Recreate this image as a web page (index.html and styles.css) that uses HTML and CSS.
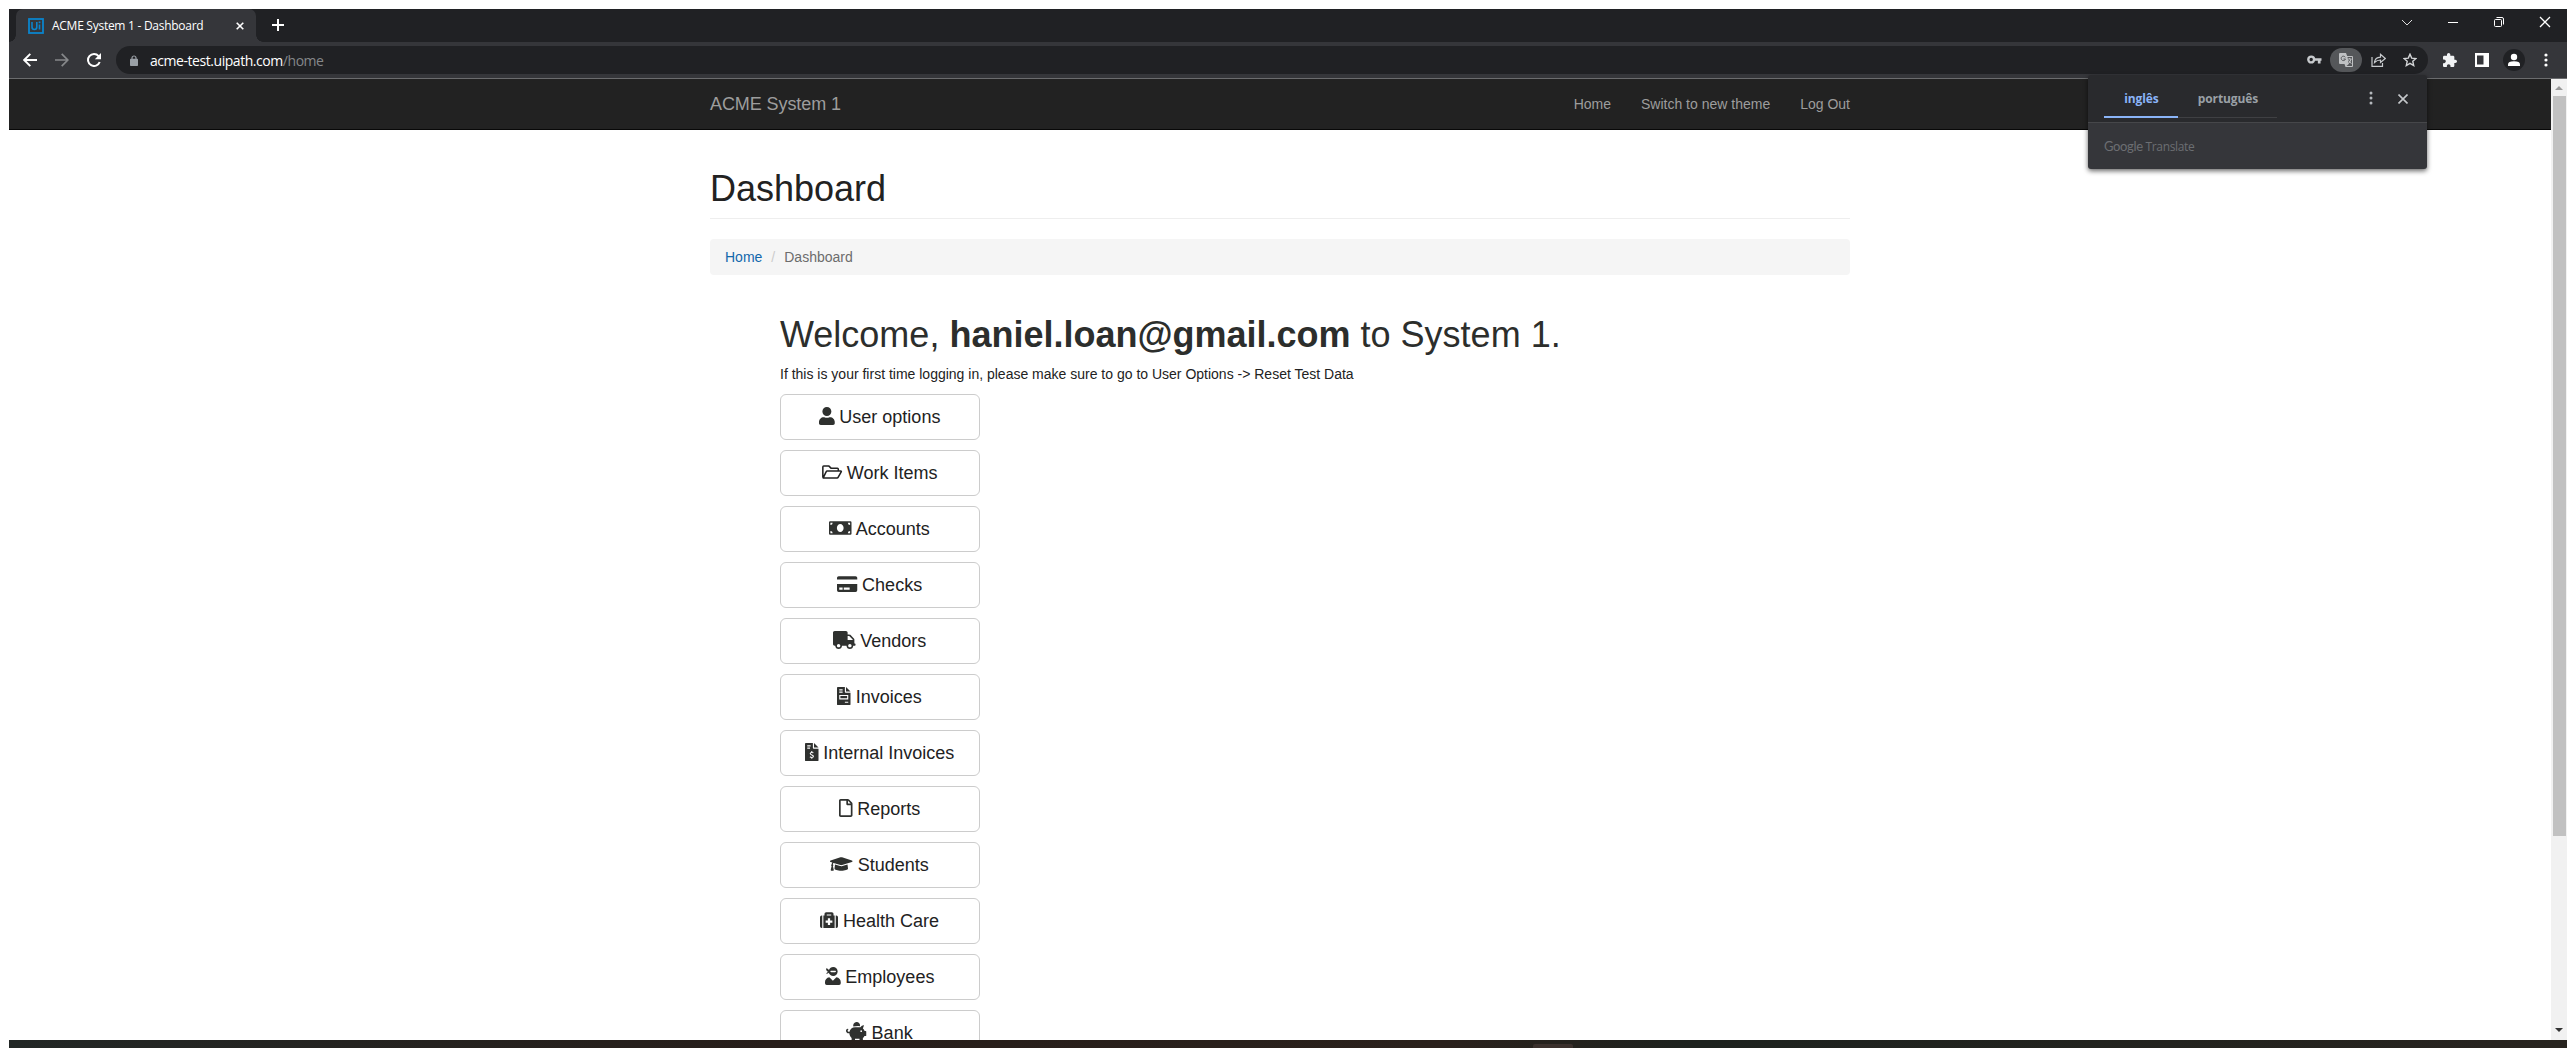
FILE: index.html
```
<!DOCTYPE html>
<html lang="en">
<head>
<meta charset="utf-8">
<title>ACME System 1 - Dashboard</title>
<link rel="stylesheet" href="styles.css">
</head>
<body>
<div class="window">
  <div class="tabstrip">
    <div class="tab">
      <svg class="favicon" viewBox="0 0 16 16"><rect x="1" y="1" width="14" height="14" fill="none" stroke="#0b84cc" stroke-width="1.8"/><path d="M4 4v5q0 2.500 2.400 2.500T8.800 9V4M11.500 6.500v5" fill="none" stroke="#0b84cc" stroke-width="1.6"/><rect x="10.700" y="3.500" width="1.700" height="1.700" fill="#0b84cc"/></svg>
      <span class="tab-title">ACME System 1 - Dashboard</span>
      <svg class="tab-close" viewBox="0 0 8 8"><path d="M.7.700l6.600 6.600M7.300.7.700 7.300" stroke="#fff" stroke-width="1.600"/></svg>
    </div>
    <svg class="new-tab" viewBox="0 0 12 12"><path d="M6 0v12M0 6h12" stroke="#fff" stroke-width="2"/></svg>
    <div class="controls">
      <svg width="12" height="16" viewBox="0 0 12 16"><path d="M1 6l5 5 5-5" fill="none" stroke="#ddd"/></svg>
      <svg width="12" height="16" viewBox="0 0 12 16"><path d="M1 8.500h10" stroke="#fff"/></svg>
      <svg width="12" height="16" viewBox="0 0 12 16"><rect x="1.500" y="5.500" width="7" height="7" rx="1" fill="none" stroke="#fff"/><path d="M3.500 3.500H9q1.500 0 1.500 1.500v5.500" fill="none" stroke="#fff"/></svg>
      <svg width="12" height="16" viewBox="0 0 12 16"><path d="M1 3l10 10M11 3L1 13" stroke="#fff" stroke-width="1.300"/></svg>
    </div>
  </div>
  <div class="toolbar">
    <div class="nav-icons">
      <svg width="14" height="14" viewBox="0 0 14 14"><path d="M14 7H1.500M7.300.8L1.200 7l6.100 6.200" fill="none" stroke="#fff" stroke-width="1.900"/></svg>
      <svg width="14" height="14" viewBox="0 0 14 14"><path d="M0 7h12.500M6.700.8L12.800 7l-6.100 6.200" fill="none" stroke="#86888a" stroke-width="1.700"/></svg>
      <svg width="14" height="14" viewBox="0 0 14 14"><path d="M11.600 3.100A6 6 0 1 0 12.700 9" fill="none" stroke="#fff" stroke-width="2"/><path d="M14 0v6.200H7.800z" fill="#fff"/></svg>
    </div>
    <div class="omnibox">
      <svg class="lock" viewBox="0 0 8 11"><path d="M2 4.500V3a2 2 0 0 1 4 0v1.500" fill="none" stroke="#9aa0a6" stroke-width="1.200"/><rect y="3.800" width="8" height="7.200" rx=".8" fill="#9aa0a6"/></svg>
      <span class="url">acme-test.uipath.com<span class="path">/home</span></span>
      <div class="omni-icons">
        <svg width="15" height="14" viewBox="0 0 15 14"><circle cx="4.200" cy="6.500" r="2.900" fill="none" stroke="#c7cacd" stroke-width="2.400"/><path d="M7 6.500h7.500M12.200 6.500v4" stroke="#c7cacd" stroke-width="2.700"/></svg>
        <span class="pill"><svg width="14" height="14" viewBox="0 0 14 14"><path d="M1 0h6l1.200 3H13a1 1 0 0 1 1 1v9a1 1 0 0 1-1 1H6.500L5.500 11H1a1 1 0 0 1-1-1V1q0-1 1-1z" fill="#bfc1c3"/><path d="M8.500 4H13v9H7.500l2.300-2z" fill="#55575a"/><path d="M6.300 4.300A2.200 2.200 0 1 0 6.500 6H4.500" fill="none" stroke="#55575a"/><path d="M8.800 6h3.700M10.700 5v1M12 6q-.5 3-2.500 4.500M9.500 7.200l2.800 3.500" fill="none" stroke="#c8cacc" stroke-width=".9"/></svg></span>
        <svg width="15" height="14" viewBox="0 0 15 14"><path d="M1 4v9.300h10.500V10M3.500 9.500Q4 4.500 9.500 4.200V1.300L14.300 5.500 9.500 9.500V7Q6 7 3.500 9.500z" fill="none" stroke="#c7cacd" stroke-width="1.200"/></svg>
        <svg width="14" height="14" viewBox="0 0 14 14"><path d="M7 1.200l1.700 3.900 4.300.4-3.200 2.800.9 4.200L7 10.300l-3.700 2.200.9-4.200L1 5.500l4.300-.4z" fill="none" stroke="#d4d6d8" stroke-width="1.400"/></svg>
      </div>
    </div>
    <div class="ext-icons">
      <svg width="14" height="14" viewBox="2 1 21 21"><path d="M20.500 11H19V7c0-1.100-.9-2-2-2h-4V3.500C13 2.120 11.880 1 10.500 1S8 2.120 8 3.500V5H4c-1.100 0-1.990.9-1.990 2v3.800H3.500c1.490 0 2.700 1.210 2.700 2.700s-1.210 2.700-2.700 2.700H2V20c0 1.100.9 2 2 2h3.800v-1.500c0-1.490 1.210-2.700 2.700-2.700s2.700 1.210 2.700 2.700V22H17c1.100 0 2-.9 2-2v-4h1.500c1.380 0 2.500-1.120 2.500-2.500S21.880 11 20.500 11z" fill="#f1f3f4"/></svg>
      <svg width="14" height="14" viewBox="0 0 14 14"><path d="M0 0h14v14H0z" fill="#fff"/><path d="M2 2.500h6.500v9H2z" fill="#35363a"/></svg>
      <svg width="22" height="22" viewBox="0 0 22 22"><circle cx="11" cy="11" r="11" fill="#202124"/><circle cx="11" cy="8" r="3.200" fill="#fff"/><path d="M5 17v-1.500q0-3.300 6-3.300t6 3.300V17z" fill="#fff"/></svg>
      <svg width="4" height="14" viewBox="0 0 4 14" fill="#fff"><circle cx="2" cy="2" r="1.600"/><circle cx="2" cy="7" r="1.600"/><circle cx="2" cy="12" r="1.600"/></svg>
    </div>
  </div>
  <div class="viewport">
    <main class="page">
      <nav class="navbar">
        <div class="container">
          <a class="brand">ACME System 1</a>
          <div class="links"><a>Home</a><a>Switch to new theme</a><a>Log Out</a></div>
        </div>
      </nav>
      <div class="container content">
        <h1 class="page-header">Dashboard</h1>
        <div class="breadcrumb"><a>Home</a><span class="sep">/</span><span>Dashboard</span></div>
        <section class="dashboard">
          <h1>Welcome, <b>haniel.loan@gmail.com</b> to System 1.</h1>
          <p>If this is your first time logging in, please make sure to go to User Options -&gt; Reset Test Data</p>
          <div class="buttons">
            <a class="btn"><svg class="w14" viewBox="0 0 448 512"><path d="M224 256c70.700 0 128-57.300 128-128S294.700 0 224 0 96 57.300 96 128s57.300 128 128 128zm89.600 32h-16.700c-22.200 10.200-46.900 16-72.900 16s-50.600-5.800-72.900-16h-16.700C60.200 288 0 348.200 0 422.400V464c0 26.500 21.500 48 48 48h352c26.500 0 48-21.500 48-48v-41.600c0-74.200-60.200-134.400-134.400-134.400z"/></svg> User options</a>
            <a class="btn"><svg class="w18" viewBox="0 0 576 512"><path d="M24 410V112q0-24 24-24h150l64 64h178q24 0 24 24v52M34 424l86-178q8-18 28-18h384q28 0 14 26l-84 146q-12 24-34 24z" fill="none" stroke="currentColor" stroke-width="44" stroke-linejoin="round"/></svg> Work Items</a>
            <a class="btn"><svg class="w20" viewBox="0 0 640 512"><path fill-rule="evenodd" d="M32 64h576q32 0 32 32v320q0 32-32 32H32q-32 0-32-32V96q0-32 32-32zM40 104v64q64 0 64-64zm496 0q0 64 64 64v-64zM40 344v64h64q0-64-64-64zm560 0q-64 0-64 64h64zM320 144c-53 0-96 50-96 112s43 112 96 112 96-50 96-112-43-112-96-112z"/></svg> Accounts</a>
            <a class="btn"><svg class="w18" viewBox="0 0 576 512"><path fill-rule="evenodd" d="M0 128V80q0-48 48-48h480q48 0 48 48v48zm0 128h576v176q0 48-48 48H48q-48 0-48-48zm64 96v64h96v-64zm128 0v64h168v-64z"/></svg> Checks</a>
            <a class="btn"><svg class="w20" viewBox="0 0 640 512"><path d="M624 352h-16V243.900c0-12.700-5.100-24.900-14.100-33.900L494 110.100c-9-9-21.200-14.100-33.900-14.100H416V48c0-26.500-21.500-48-48-48H48C21.500 0 0 21.500 0 48v320c0 26.500 21.500 48 48 48h16c0 53 43 96 96 96s96-43 96-96h128c0 53 43 96 96 96s96-43 96-96h48c8.800 0 16-7.200 16-16v-32c0-8.800-7.200-16-16-16zM160 464c-26.500 0-48-21.500-48-48s21.500-48 48-48 48 21.500 48 48-21.500 48-48 48zm320 0c-26.500 0-48-21.500-48-48s21.500-48 48-48 48 21.500 48 48-21.500 48-48 48zm80-208H416V144h44.100l99.900 99.900V256z"/></svg> Vendors</a>
            <a class="btn"><svg class="w12" viewBox="0 0 384 512"><path fill-rule="evenodd" d="M24 0h200v136q0 24 24 24h136v328q0 24-24 24H24q-24 0-24-24V24Q0 0 24 0zM64 64v32h96V64zm0 64v32h96v-32zm0 96v128h256V224zm32 32h192v64H96zm128 160v32h96v-32z"/><path d="M256 0l128 128H256z"/></svg> Invoices</a>
            <a class="btn"><svg class="w12" viewBox="0 0 384 512"><path fill-rule="evenodd" d="M24 0h200v136q0 24 24 24h136v328q0 24-24 24H24q-24 0-24-24V24Q0 0 24 0zM64 64v32h96V64zm0 64v32h80v-32z"/><path d="M256 0l128 128H256z"/><path d="M240 282q-16-14-46-14-46 0-46 34c0 48 92 26 92 74q0 34-48 34-30 0-52-18M193 230v38M193 410v40" fill="none" stroke="#fff" stroke-width="30"/></svg> Internal Invoices</a>
            <a class="btn"><svg class="w12" viewBox="0 0 384 512"><path d="M369.900 97.900L286 14C277 5 264.800 0 252.100 0H48C21.500 0 0 21.500 0 48v416c0 26.500 21.500 48 48 48h288c26.500 0 48-21.500 48-48V131.900c0-12.700-5.100-25-14.100-34zM332.100 128H256V51.900l76.100 76.100zM48 464V48h160v104c0 13.300 10.700 24 24 24h104v288H48z"/></svg> Reports</a>
            <a class="btn"><svg class="w20" viewBox="0 0 640 512"><path d="M622.340 153.200L343.400 67.500c-15.200-4.670-31.600-4.670-46.790 0L17.660 153.200c-23.540 7.230-23.540 38.360 0 45.590l48.630 14.940c-10.670 13.190-17.230 29.280-17.880 46.900C38.780 266.150 32 276.110 32 288c0 10.780 5.680 19.850 13.860 25.650L20.330 428.530C18.110 438.520 25.710 448 35.940 448h56.110c10.240 0 17.840-9.480 15.620-19.470L82.140 313.650C90.320 307.850 96 298.780 96 288c0-11.570-6.470-21.250-15.660-26.870.76-15.020 8.440-28.300 20.690-36.720L296.600 284.500c9.060 2.780 26.440 6.250 46.790 0l278.950-85.700c23.550-7.240 23.550-38.360 0-45.600zM352.790 315.090c-28.530 8.760-52.840 3.920-65.590 0l-145.020-44.550L128 384c0 35.350 85.960 64 192 64s192-28.650 192-64l-14.180-113.470-145.030 44.560z"/></svg> Students</a>
            <a class="btn"><svg class="w16" viewBox="0 0 512 512"><path fill-rule="evenodd" d="M96 480V128h32V80q0-48 48-48h160q48 0 48 48v48h32v352zM192 128h128V96H192zm32 80v64h-64v64h64v64h64v-64h64v-64h-64v-64z"/><path d="M48 128h16v352H48q-48 0-48-48V176q0-48 48-48zM448 128h16q48 0 48 48v256q0 48-48 48h-16z"/></svg> Health Care</a>
            <a class="btn"><svg class="w14" viewBox="0 0 448 512"><path fill-rule="evenodd" d="M32 192q20-44 64-56C50 124 24 84 32 32q52 4 80 54C134 34 178 0 232 0c72 0 128 56 128 128s-56 128-128 128c-58 0-108-38-124-92-18 22-44 32-76 28zm136-88q-16 0-16 16 0 32 32 32h96q32 0 32-32 0-16-16-16z"/><path d="M325 290L224 391 123 290C50 300 0 360 0 426v38q0 48 48 48h352q48 0 48-48v-38c0-66-50-126-123-136z"/></svg> Employees</a>
            <a class="btn"><svg class="w18" viewBox="0 0 576 512"><path fill-rule="evenodd" d="M560 224h-30q-18-40-50-66l32-94q-58-8-104 56-12-2-24-2H256c-78 0-142 56-156 128H72q-28-4-24-36 2-18 20-22 4-28-16-28C14 160 0 190 0 218c0 40 32 76 72 76h24c0 54 26 100 64 130v72q0 16 16 16h64q16 0 16-16v-48h128v48q0 16 16 16h64q16 0 16-16v-72q28-20 46-56h34q16 0 16-16V240q0-16-16-16zM432 256a24 24 0 1 1 0-48 24 24 0 0 1 0 48z"/><path d="M208 98a98 98 0 1 1 190-8q-70-8-190 8z"/></svg> Bank</a>
          </div>
        </section>
      </div>
    </main>
    <div class="scrollbar">
      <svg width="8" height="5" viewBox="0 0 8 5"><path d="M4 0l4 4H0z" fill="#999"/></svg>
      <div class="thumb"></div>
      <svg width="8" height="5" viewBox="0 0 8 5"><path d="M0 0h8L4 4z" fill="#333"/></svg>
    </div>
  </div>
</div>
<div class="taskbar"><div class="task"></div></div>
<div class="translate">
  <div class="tr-head">
    <span class="lang on">inglês</span><span class="lang">português</span>
    <svg class="tr-dots" width="4" height="14" viewBox="0 0 4 14" fill="#b4b8bc"><circle cx="2" cy="2" r="1.500"/><circle cx="2" cy="7" r="1.500"/><circle cx="2" cy="12" r="1.500"/></svg>
    <svg width="10" height="10" viewBox="0 0 10 10"><path d="M.5.500l9 9M9.500.5l-9 9" stroke="#c4c7ca" stroke-width="1.600"/></svg>
  </div>
  <div class="tr-body"><span class="g">Google</span> <span class="t">Translate</span></div>
</div>
</body>
</html>
```
FILE: styles.css
```
* { box-sizing: border-box; }
body {
  margin: 0;
  width: 2576px;
  height: 1048px;
  padding: 9px 9px 0;
  overflow: hidden;
  background: #fff;
  font: 14px/20px "Liberation Sans", Arial, sans-serif;
  color: #222;
}
svg { display: block; flex: none; }
.window { height: 1031px; display: flex; flex-direction: column; }

.tabstrip { height: 33px; flex: none; display: flex; background: #202124; padding-left: 7px; }
.tab {
  position: relative;
  width: 240px;
  display: flex;
  align-items: center;
  padding: 0 12px;
  background: #35363a;
  border-radius: 7px 7px 0 0;
}
.tab::before, .tab::after {
  content: "";
  position: absolute;
  bottom: 0;
  width: 7px;
  height: 7px;
}
.tab::before { left: -7px; background: radial-gradient(circle at 0 0, transparent 6.5px, #35363a 7px); }
.tab::after { right: -7px; background: radial-gradient(circle at 100% 0, transparent 6.5px, #35363a 7px); }
.favicon { width: 16px; height: 16px; }
.tab-title { margin-left: 8px; font: 12px/16px "Open Sans", "Noto Sans", sans-serif; letter-spacing: -0.27px; color: #fff; white-space: nowrap; }
.tab-close { width: 8px; height: 8px; margin-left: auto; }
.new-tab { width: 12px; height: 12px; margin: 10px 0 0 16px; }
.controls { margin: 5px 16px 0 auto; display: flex; gap: 34px; }

.toolbar {
  height: 37px;
  flex: none;
  display: flex;
  align-items: center;
  background: #35363a;
  border-bottom: 1px solid #6b6c6e;
  padding: 0 19px 0 14px;
}
.nav-icons { display: flex; gap: 18px; width: 93px; flex: none; }
.omnibox {
  flex: none;
  width: 2312px;
  height: 28px;
  border-radius: 14px;
  background: #202124;
  display: flex;
  align-items: center;
  padding: 0 11px 0 14px;
}
.lock { width: 8px; height: 11px; }
.url { margin: 1px 0 0 12px; font: 14px/20px "Open Sans", "Noto Sans", sans-serif; letter-spacing: -0.45px; color: #fff; white-space: nowrap; }
.path { color: #85878a; }
.omni-icons { margin-left: auto; display: flex; align-items: center; }
.pill { width: 32px; height: 24px; border-radius: 12px; background: #55575a; margin: 0 9px 0 8px; display: flex; align-items: center; justify-content: center; }
.omni-icons > :last-child { margin-left: 17px; }
.ext-icons { margin-left: 15px; display: flex; align-items: center; gap: 18px; }
.ext-icons > :nth-child(3) { margin: 0 1px 0 -4px; }

.viewport { flex: 1; min-height: 0; display: flex; }
.page { flex: 1; overflow: hidden; }
.container { width: 1140px; margin: 0 auto; }
.navbar { height: 51px; background: #222; border-bottom: 1px solid #080808; color: #9d9d9d; }
.navbar .container { display: flex; justify-content: space-between; height: 50px; align-items: center; }
.brand { font-size: 18px; letter-spacing: -.08px; }
.links { display: flex; gap: 30px; }
.content { padding-top: 39px; }
h1 { margin: 0; font-size: 36px; line-height: 40px; font-weight: 500; }
.page-header { height: 50px; border-bottom: 1px solid #eee; }
.breadcrumb { height: 36px; margin-top: 20px; padding: 8px 15px; background: #f5f5f5; border-radius: 4px; color: #6c6c6c; display: flex; gap: 9px; }
.breadcrumb a { color: #1268ac; }
.sep { color: #ccc; }
.dashboard { margin: 40px 0 0 70px; }
.dashboard h1 { color: #2c2e2c; }
p { margin: 9px 0 10px; }
.buttons { width: 200px; display: flex; flex-direction: column; gap: 10px; }
.btn {
  height: 46px;
  flex: none;
  border: 1px solid #ccc;
  border-radius: 6px;
  padding: 10px 1px 0 0;
  text-align: center;
  font-size: 18px;
  line-height: 24px;
  color: #222;
}
.btn svg { display: inline-block; height: 18px; vertical-align: -2.25px; fill: #2f312f; overflow: visible; }
.w12 { width: 13.5px; }
.w14 { width: 15.75px; }
.w16 { width: 18px; }
.w18 { width: 20.25px; }
.w20 { width: 22.5px; }

.scrollbar { width: 16px; background: #f1f1f1; display: flex; flex-direction: column; align-items: center; padding: 7px 0; }
.thumb { width: 13px; height: 740px; margin: 5px 0 auto 1px; background: #c1c1c1; }

.taskbar { height: 8px; background: linear-gradient(90deg, #222725, #271e1a 30%, #2a211c 56%, #1d221e 66%, #28241f); }
.task { margin-left: 1524px; position: relative; top: 4px; width: 40px; height: 4px; background: #3a302c; border-radius: 2px 2px 0 0; }

.translate {
  position: absolute;
  left: 2088px;
  top: 75px;
  width: 339px;
  height: 94px;
  border-radius: 3px;
  overflow: hidden;
  background: #35363a;
  box-shadow: 0 2px 5px rgba(0, 0, 0, .6);
}
.tr-head { height: 48px; padding: 0 19px 0 16px; display: flex; align-items: center; background: #292a2d; border-bottom: 1px solid #46474a; }
.lang { height: 31px; margin-top: 8px; padding: 4px 0 0 1px; width: 99px; text-align: center; border-bottom: 1px solid #3f4043; font: 700 12px/16px "Open Sans", "Noto Sans", sans-serif; letter-spacing: -.1px; color: #9aa0a6; }
.lang.on { width: 74px; border-bottom: 2px solid #8ab4f8; color: #8ab4f8; }
.tr-dots { margin: 0 25px 1px auto; }
.tr-body { padding: 15px 16px; color: #6c6e72; font: 12px/16px "Open Sans", "Noto Sans", sans-serif; letter-spacing: -.35px; }
.g { font: 13px/16px Lato, sans-serif; }
```
